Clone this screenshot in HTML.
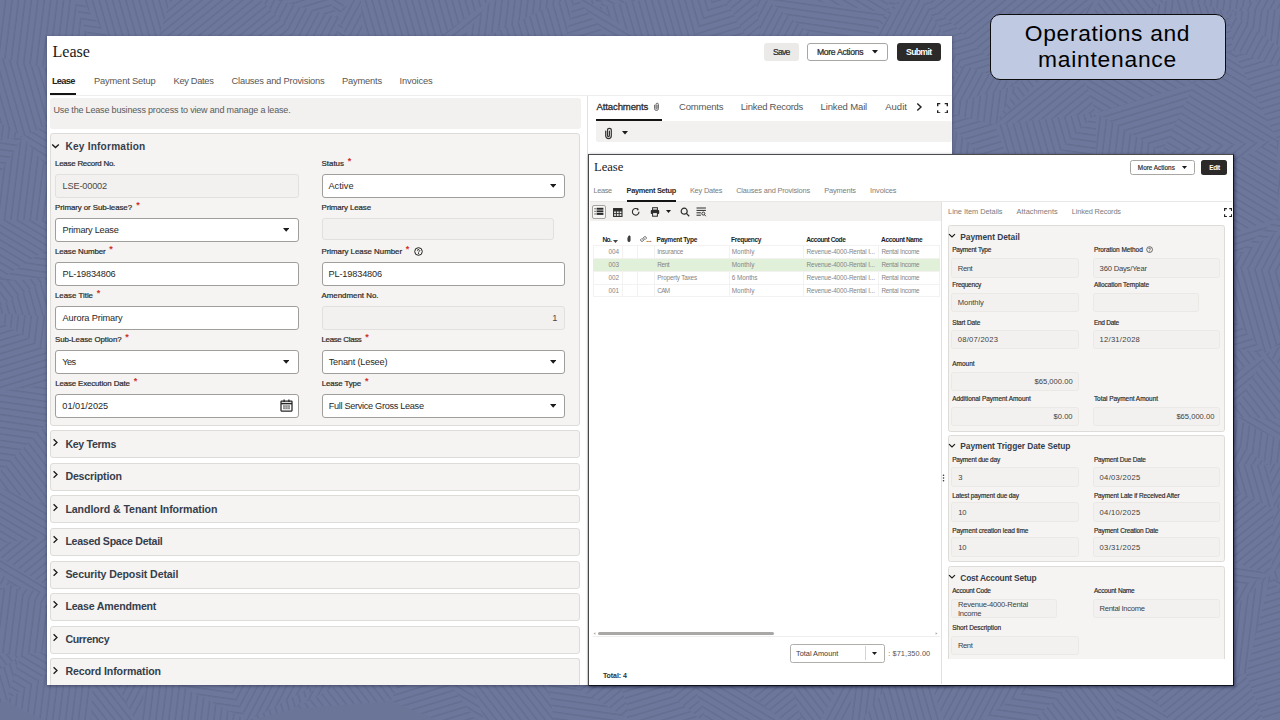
<!DOCTYPE html>
<html><head><meta charset="utf-8"><title>Operations and maintenance</title>
<style>
html,body{margin:0;padding:0;}
body{width:1280px;height:720px;overflow:hidden;background:#6b7598;font-family:"Liberation Sans",sans-serif;}
#slide{position:relative;width:1280px;height:720px;overflow:hidden;background:#6b7598;}
.b{position:absolute;box-sizing:border-box;display:block;}
.t{position:absolute;white-space:nowrap;font-family:"Liberation Sans",sans-serif;}
.win{position:absolute;overflow:hidden;background:#fff;box-sizing:border-box;}
.sf{font-family:"Liberation Serif",serif;}
.sb{-webkit-text-stroke:.027em currentColor;}

</style></head>
<body>
<div id="slide">
<svg class="b" style="left:0.00px;top:0.00px;" width="1280" height="720" viewBox="0 0 1280 720"><defs><pattern id="h0" patternUnits="userSpaceOnUse" width="6.4" height="6.4" patternTransform="rotate(8)"><rect width="6.4" height="6.4" fill="#6d779b"/><rect y="0" width="6.4" height="1.5" fill="#636d90"/></pattern><pattern id="h1" patternUnits="userSpaceOnUse" width="6.4" height="6.4" patternTransform="rotate(31)"><rect width="6.4" height="6.4" fill="#6d779b"/><rect y="0" width="6.4" height="1.5" fill="#636d90"/></pattern><pattern id="h2" patternUnits="userSpaceOnUse" width="6.4" height="6.4" patternTransform="rotate(52)"><rect width="6.4" height="6.4" fill="#6d779b"/><rect y="0" width="6.4" height="1.5" fill="#636d90"/></pattern><pattern id="h3" patternUnits="userSpaceOnUse" width="6.4" height="6.4" patternTransform="rotate(74)"><rect width="6.4" height="6.4" fill="#6d779b"/><rect y="0" width="6.4" height="1.5" fill="#636d90"/></pattern><pattern id="h4" patternUnits="userSpaceOnUse" width="6.4" height="6.4" patternTransform="rotate(97)"><rect width="6.4" height="6.4" fill="#6d779b"/><rect y="0" width="6.4" height="1.5" fill="#636d90"/></pattern><pattern id="h5" patternUnits="userSpaceOnUse" width="6.4" height="6.4" patternTransform="rotate(118)"><rect width="6.4" height="6.4" fill="#6d779b"/><rect y="0" width="6.4" height="1.5" fill="#636d90"/></pattern><pattern id="h6" patternUnits="userSpaceOnUse" width="6.4" height="6.4" patternTransform="rotate(141)"><rect width="6.4" height="6.4" fill="#6d779b"/><rect y="0" width="6.4" height="1.5" fill="#636d90"/></pattern><pattern id="h7" patternUnits="userSpaceOnUse" width="6.4" height="6.4" patternTransform="rotate(163)"><rect width="6.4" height="6.4" fill="#6d779b"/><rect y="0" width="6.4" height="1.5" fill="#636d90"/></pattern><filter id="bl" x="0" y="0" width="100%" height="100%"><feGaussianBlur stdDeviation="0.7"/></filter></defs><g filter="url(#bl)"><path d="M-81 -63L25 -68L-11 -14z" fill="url(#h7)"/><path d="M-81 -63L-11 -14L-58 11z" fill="url(#h1)"/><path d="M25 -68L78 -61L65 -22z" fill="url(#h5)"/><path d="M25 -68L65 -22L-11 -14z" fill="url(#h0)"/><path d="M78 -61L137 -65L172 -5z" fill="url(#h4)"/><path d="M78 -61L172 -5L65 -22z" fill="url(#h5)"/><path d="M137 -65L242 -51L255 -6z" fill="url(#h6)"/><path d="M137 -65L255 -6L172 -5z" fill="url(#h2)"/><path d="M242 -51L288 -76L255 -6z" fill="url(#h6)"/><path d="M288 -76L339 18L255 -6z" fill="url(#h7)"/><path d="M288 -76L365 -50L339 18z" fill="url(#h1)"/><path d="M365 -50L360 -15L339 18z" fill="url(#h6)"/><path d="M365 -50L480 -90L360 -15z" fill="url(#h0)"/><path d="M480 -90L493 -2L360 -15z" fill="url(#h1)"/><path d="M480 -90L575 -42L493 -2z" fill="url(#h3)"/><path d="M575 -42L575 -5L493 -2z" fill="url(#h4)"/><path d="M575 -42L633 -60L598 7z" fill="url(#h0)"/><path d="M575 -42L598 7L575 -5z" fill="url(#h3)"/><path d="M633 -60L681 -91L598 7z" fill="url(#h0)"/><path d="M681 -91L719 -12L598 7z" fill="url(#h1)"/><path d="M681 -91L782 -89L755 -9z" fill="url(#h4)"/><path d="M681 -91L755 -9L719 -12z" fill="url(#h5)"/><path d="M782 -89L839 -79L755 -9z" fill="url(#h6)"/><path d="M839 -79L886 13L755 -9z" fill="url(#h1)"/><path d="M839 -79L908 -68L886 13z" fill="url(#h1)"/><path d="M908 -68L913 -13L886 13z" fill="url(#h0)"/><path d="M908 -68L1010 -48L990 -23z" fill="url(#h2)"/><path d="M908 -68L990 -23L913 -13z" fill="url(#h6)"/><path d="M1010 -48L1093 -59L1110 -17z" fill="url(#h2)"/><path d="M1010 -48L1110 -17L990 -23z" fill="url(#h7)"/><path d="M1093 -59L1170 -58L1110 -17z" fill="url(#h0)"/><path d="M1170 -58L1174 -3L1110 -17z" fill="url(#h6)"/><path d="M1170 -58L1245 -78L1174 -3z" fill="url(#h6)"/><path d="M1245 -78L1229 12L1174 -3z" fill="url(#h4)"/><path d="M1245 -78L1356 -40L1229 12z" fill="url(#h4)"/><path d="M1356 -40L1304 7L1229 12z" fill="url(#h5)"/><path d="M-58 11L-11 -14L-101 62z" fill="url(#h7)"/><path d="M-11 -14L-17 54L-101 62z" fill="url(#h4)"/><path d="M-11 -14L65 -22L-17 54z" fill="url(#h4)"/><path d="M65 -22L106 82L-17 54z" fill="url(#h4)"/><path d="M65 -22L172 -5L144 86z" fill="url(#h3)"/><path d="M65 -22L144 86L106 82z" fill="url(#h0)"/><path d="M172 -5L255 -6L144 86z" fill="url(#h6)"/><path d="M255 -6L217 61L144 86z" fill="url(#h6)"/><path d="M255 -6L339 18L333 73z" fill="url(#h5)"/><path d="M255 -6L333 73L217 61z" fill="url(#h6)"/><path d="M339 18L360 -15L366 91z" fill="url(#h5)"/><path d="M339 18L366 91L333 73z" fill="url(#h1)"/><path d="M360 -15L493 -2L366 91z" fill="url(#h3)"/><path d="M493 -2L451 53L366 91z" fill="url(#h6)"/><path d="M493 -2L575 -5L451 53z" fill="url(#h4)"/><path d="M575 -5L562 57L451 53z" fill="url(#h3)"/><path d="M575 -5L598 7L612 44z" fill="url(#h1)"/><path d="M575 -5L612 44L562 57z" fill="url(#h7)"/><path d="M598 7L719 -12L677 70z" fill="url(#h3)"/><path d="M598 7L677 70L612 44z" fill="url(#h1)"/><path d="M719 -12L755 -9L765 71z" fill="url(#h6)"/><path d="M719 -12L765 71L677 70z" fill="url(#h7)"/><path d="M755 -9L886 13L850 64z" fill="url(#h0)"/><path d="M755 -9L850 64L765 71z" fill="url(#h5)"/><path d="M886 13L913 -13L850 64z" fill="url(#h1)"/><path d="M913 -13L964 65L850 64z" fill="url(#h5)"/><path d="M913 -13L990 -23L1018 85z" fill="url(#h6)"/><path d="M913 -13L1018 85L964 65z" fill="url(#h7)"/><path d="M990 -23L1110 -17L1018 85z" fill="url(#h6)"/><path d="M1110 -17L1073 48L1018 85z" fill="url(#h5)"/><path d="M1110 -17L1174 -3L1073 48z" fill="url(#h2)"/><path d="M1174 -3L1195 83L1073 48z" fill="url(#h4)"/><path d="M1174 -3L1229 12L1195 83z" fill="url(#h3)"/><path d="M1229 12L1233 50L1195 83z" fill="url(#h7)"/><path d="M1229 12L1304 7L1340 89z" fill="url(#h4)"/><path d="M1229 12L1340 89L1233 50z" fill="url(#h5)"/><path d="M-101 62L-17 54L23 137z" fill="url(#h3)"/><path d="M-101 62L23 137L-96 155z" fill="url(#h4)"/><path d="M-17 54L106 82L23 137z" fill="url(#h3)"/><path d="M106 82L73 111L23 137z" fill="url(#h3)"/><path d="M106 82L144 86L73 111z" fill="url(#h3)"/><path d="M144 86L128 156L73 111z" fill="url(#h0)"/><path d="M144 86L217 61L128 156z" fill="url(#h0)"/><path d="M217 61L218 143L128 156z" fill="url(#h4)"/><path d="M217 61L333 73L297 149z" fill="url(#h0)"/><path d="M217 61L297 149L218 143z" fill="url(#h0)"/><path d="M333 73L366 91L396 121z" fill="url(#h4)"/><path d="M333 73L396 121L297 149z" fill="url(#h1)"/><path d="M366 91L451 53L396 121z" fill="url(#h2)"/><path d="M451 53L449 143L396 121z" fill="url(#h3)"/><path d="M451 53L562 57L449 143z" fill="url(#h5)"/><path d="M562 57L520 118L449 143z" fill="url(#h7)"/><path d="M562 57L612 44L628 150z" fill="url(#h3)"/><path d="M562 57L628 150L520 118z" fill="url(#h5)"/><path d="M612 44L677 70L709 121z" fill="url(#h2)"/><path d="M612 44L709 121L628 150z" fill="url(#h1)"/><path d="M677 70L765 71L709 121z" fill="url(#h7)"/><path d="M765 71L805 117L709 121z" fill="url(#h3)"/><path d="M765 71L850 64L829 120z" fill="url(#h4)"/><path d="M765 71L829 120L805 117z" fill="url(#h6)"/><path d="M850 64L964 65L829 120z" fill="url(#h5)"/><path d="M964 65L933 109L829 120z" fill="url(#h2)"/><path d="M964 65L1018 85L933 109z" fill="url(#h5)"/><path d="M1018 85L995 125L933 109z" fill="url(#h4)"/><path d="M1018 85L1073 48L995 125z" fill="url(#h2)"/><path d="M1073 48L1096 113L995 125z" fill="url(#h6)"/><path d="M1073 48L1195 83L1096 113z" fill="url(#h1)"/><path d="M1195 83L1162 152L1096 113z" fill="url(#h7)"/><path d="M1195 83L1233 50L1162 152z" fill="url(#h1)"/><path d="M1233 50L1277 140L1162 152z" fill="url(#h1)"/><path d="M1233 50L1340 89L1337 136z" fill="url(#h7)"/><path d="M1233 50L1337 136L1277 140z" fill="url(#h7)"/><path d="M-96 155L23 137L-29 219z" fill="url(#h0)"/><path d="M-96 155L-29 219L-100 174z" fill="url(#h1)"/><path d="M23 137L73 111L90 222z" fill="url(#h1)"/><path d="M23 137L90 222L-29 219z" fill="url(#h4)"/><path d="M73 111L128 156L127 205z" fill="url(#h5)"/><path d="M73 111L127 205L90 222z" fill="url(#h4)"/><path d="M128 156L218 143L127 205z" fill="url(#h3)"/><path d="M218 143L233 210L127 205z" fill="url(#h5)"/><path d="M218 143L297 149L233 210z" fill="url(#h5)"/><path d="M297 149L301 224L233 210z" fill="url(#h5)"/><path d="M297 149L396 121L301 224z" fill="url(#h5)"/><path d="M396 121L365 200L301 224z" fill="url(#h7)"/><path d="M396 121L449 143L365 200z" fill="url(#h4)"/><path d="M449 143L482 219L365 200z" fill="url(#h7)"/><path d="M449 143L520 118L482 219z" fill="url(#h4)"/><path d="M520 118L560 209L482 219z" fill="url(#h7)"/><path d="M520 118L628 150L642 220z" fill="url(#h6)"/><path d="M520 118L642 220L560 209z" fill="url(#h3)"/><path d="M628 150L709 121L693 208z" fill="url(#h5)"/><path d="M628 150L693 208L642 220z" fill="url(#h0)"/><path d="M709 121L805 117L804 217z" fill="url(#h6)"/><path d="M709 121L804 217L693 208z" fill="url(#h6)"/><path d="M805 117L829 120L804 217z" fill="url(#h5)"/><path d="M829 120L853 213L804 217z" fill="url(#h6)"/><path d="M829 120L933 109L853 213z" fill="url(#h2)"/><path d="M933 109L958 202L853 213z" fill="url(#h2)"/><path d="M933 109L995 125L1021 192z" fill="url(#h7)"/><path d="M933 109L1021 192L958 202z" fill="url(#h4)"/><path d="M995 125L1096 113L1021 192z" fill="url(#h3)"/><path d="M1096 113L1097 204L1021 192z" fill="url(#h0)"/><path d="M1096 113L1162 152L1097 204z" fill="url(#h4)"/><path d="M1162 152L1145 205L1097 204z" fill="url(#h0)"/><path d="M1162 152L1277 140L1145 205z" fill="url(#h6)"/><path d="M1277 140L1278 218L1145 205z" fill="url(#h1)"/><path d="M1277 140L1337 136L1278 218z" fill="url(#h4)"/><path d="M1337 136L1340 192L1278 218z" fill="url(#h1)"/><path d="M-100 174L-29 219L-4 282z" fill="url(#h4)"/><path d="M-100 174L-4 282L-64 268z" fill="url(#h1)"/><path d="M-29 219L90 222L-4 282z" fill="url(#h1)"/><path d="M90 222L53 277L-4 282z" fill="url(#h0)"/><path d="M853 213L958 202L918 260z" fill="url(#h5)"/><path d="M958 202L1021 192L918 260z" fill="url(#h7)"/><path d="M1021 192L1032 286L918 260z" fill="url(#h7)"/><path d="M1021 192L1097 204L1032 286z" fill="url(#h1)"/><path d="M1097 204L1115 258L1032 286z" fill="url(#h0)"/><path d="M1097 204L1145 205L1175 254z" fill="url(#h5)"/><path d="M1097 204L1175 254L1115 258z" fill="url(#h0)"/><path d="M1145 205L1278 218L1175 254z" fill="url(#h1)"/><path d="M1278 218L1226 264L1175 254z" fill="url(#h7)"/><path d="M1278 218L1340 192L1226 264z" fill="url(#h0)"/><path d="M1340 192L1346 282L1226 264z" fill="url(#h5)"/><path d="M-64 268L-4 282L-65 353z" fill="url(#h1)"/><path d="M-4 282L-13 313L-65 353z" fill="url(#h6)"/><path d="M-4 282L53 277L-13 313z" fill="url(#h2)"/><path d="M53 277L75 318L-13 313z" fill="url(#h3)"/><path d="M848 273L918 260L956 316z" fill="url(#h2)"/><path d="M848 273L956 316L855 305z" fill="url(#h2)"/><path d="M918 260L1032 286L956 316z" fill="url(#h7)"/><path d="M1032 286L992 306L956 316z" fill="url(#h0)"/><path d="M1032 286L1115 258L992 306z" fill="url(#h0)"/><path d="M1115 258L1100 327L992 306z" fill="url(#h5)"/><path d="M1115 258L1175 254L1178 338z" fill="url(#h2)"/><path d="M1115 258L1178 338L1100 327z" fill="url(#h5)"/><path d="M1175 254L1226 264L1266 354z" fill="url(#h3)"/><path d="M1175 254L1266 354L1178 338z" fill="url(#h7)"/><path d="M1226 264L1346 282L1266 354z" fill="url(#h3)"/><path d="M1346 282L1337 314L1266 354z" fill="url(#h7)"/><path d="M-65 353L-13 313L-29 395z" fill="url(#h4)"/><path d="M-65 353L-29 395L-79 379z" fill="url(#h6)"/><path d="M-13 313L75 318L91 379z" fill="url(#h4)"/><path d="M-13 313L91 379L-29 395z" fill="url(#h7)"/><path d="M855 305L956 316L963 394z" fill="url(#h6)"/><path d="M855 305L963 394L881 411z" fill="url(#h4)"/><path d="M956 316L992 306L963 394z" fill="url(#h0)"/><path d="M992 306L1023 381L963 394z" fill="url(#h3)"/><path d="M992 306L1100 327L1023 381z" fill="url(#h7)"/><path d="M1100 327L1105 413L1023 381z" fill="url(#h5)"/><path d="M1100 327L1178 338L1178 407z" fill="url(#h3)"/><path d="M1100 327L1178 407L1105 413z" fill="url(#h6)"/><path d="M1178 338L1266 354L1178 407z" fill="url(#h2)"/><path d="M1266 354L1231 417L1178 407z" fill="url(#h6)"/><path d="M1266 354L1337 314L1355 421z" fill="url(#h5)"/><path d="M1266 354L1355 421L1231 417z" fill="url(#h2)"/><path d="M-79 379L-29 395L-11 483z" fill="url(#h2)"/><path d="M-79 379L-11 483L-76 477z" fill="url(#h4)"/><path d="M-29 395L91 379L-11 483z" fill="url(#h0)"/><path d="M91 379L99 454L-11 483z" fill="url(#h2)"/><path d="M881 411L963 394L885 462z" fill="url(#h1)"/><path d="M963 394L963 440L885 462z" fill="url(#h4)"/><path d="M963 394L1023 381L997 463z" fill="url(#h3)"/><path d="M963 394L997 463L963 440z" fill="url(#h6)"/><path d="M1023 381L1105 413L1079 474z" fill="url(#h1)"/><path d="M1023 381L1079 474L997 463z" fill="url(#h7)"/><path d="M1105 413L1178 407L1178 463z" fill="url(#h6)"/><path d="M1105 413L1178 463L1079 474z" fill="url(#h7)"/><path d="M1178 407L1231 417L1269 465z" fill="url(#h4)"/><path d="M1178 407L1269 465L1178 463z" fill="url(#h5)"/><path d="M1231 417L1355 421L1315 456z" fill="url(#h1)"/><path d="M1231 417L1315 456L1269 465z" fill="url(#h4)"/><path d="M-76 477L-11 483L-57 549z" fill="url(#h1)"/><path d="M-11 483L-18 546L-57 549z" fill="url(#h5)"/><path d="M-11 483L99 454L106 529z" fill="url(#h2)"/><path d="M-11 483L106 529L-18 546z" fill="url(#h1)"/><path d="M885 462L963 440L914 525z" fill="url(#h0)"/><path d="M963 440L997 463L914 525z" fill="url(#h3)"/><path d="M997 463L1033 549L914 525z" fill="url(#h2)"/><path d="M997 463L1079 474L1091 518z" fill="url(#h6)"/><path d="M997 463L1091 518L1033 549z" fill="url(#h4)"/><path d="M1079 474L1178 463L1091 518z" fill="url(#h6)"/><path d="M1178 463L1151 534L1091 518z" fill="url(#h1)"/><path d="M1178 463L1269 465L1274 509z" fill="url(#h3)"/><path d="M1178 463L1274 509L1151 534z" fill="url(#h6)"/><path d="M1269 465L1315 456L1274 509z" fill="url(#h5)"/><path d="M1315 456L1343 503L1274 509z" fill="url(#h4)"/><path d="M-57 549L-18 546L-96 580z" fill="url(#h7)"/><path d="M-18 546L11 585L-96 580z" fill="url(#h5)"/><path d="M-18 546L106 529L69 600z" fill="url(#h6)"/><path d="M-18 546L69 600L11 585z" fill="url(#h1)"/><path d="M844 527L914 525L950 610z" fill="url(#h1)"/><path d="M844 527L950 610L879 580z" fill="url(#h6)"/><path d="M914 525L1033 549L1038 584z" fill="url(#h1)"/><path d="M914 525L1038 584L950 610z" fill="url(#h5)"/><path d="M1033 549L1091 518L1038 584z" fill="url(#h6)"/><path d="M1091 518L1081 616L1038 584z" fill="url(#h2)"/><path d="M1091 518L1151 534L1081 616z" fill="url(#h2)"/><path d="M1151 534L1153 620L1081 616z" fill="url(#h6)"/><path d="M1151 534L1274 509L1271 575z" fill="url(#h6)"/><path d="M1151 534L1271 575L1153 620z" fill="url(#h0)"/><path d="M1274 509L1343 503L1271 575z" fill="url(#h5)"/><path d="M1343 503L1310 606L1271 575z" fill="url(#h3)"/><path d="M-96 580L11 585L-92 639z" fill="url(#h0)"/><path d="M11 585L20 656L-92 639z" fill="url(#h4)"/><path d="M11 585L69 600L95 641z" fill="url(#h5)"/><path d="M11 585L95 641L20 656z" fill="url(#h4)"/><path d="M211 595L297 578L323 681z" fill="url(#h5)"/><path d="M211 595L323 681L205 644z" fill="url(#h4)"/><path d="M297 578L392 591L323 681z" fill="url(#h2)"/><path d="M392 591L418 640L323 681z" fill="url(#h4)"/><path d="M879 580L950 610L862 642z" fill="url(#h3)"/><path d="M950 610L917 645L862 642z" fill="url(#h0)"/><path d="M950 610L1038 584L917 645z" fill="url(#h3)"/><path d="M1038 584L1034 685L917 645z" fill="url(#h1)"/><path d="M1038 584L1081 616L1118 639z" fill="url(#h7)"/><path d="M1038 584L1118 639L1034 685z" fill="url(#h6)"/><path d="M1081 616L1153 620L1118 639z" fill="url(#h5)"/><path d="M1153 620L1144 683L1118 639z" fill="url(#h1)"/><path d="M1153 620L1271 575L1144 683z" fill="url(#h5)"/><path d="M1271 575L1246 674L1144 683z" fill="url(#h4)"/><path d="M1271 575L1310 606L1316 658z" fill="url(#h1)"/><path d="M1271 575L1316 658L1246 674z" fill="url(#h7)"/><path d="M-92 639L20 656L-77 722z" fill="url(#h2)"/><path d="M20 656L6 701L-77 722z" fill="url(#h3)"/><path d="M20 656L95 641L6 701z" fill="url(#h1)"/><path d="M95 641L90 744L6 701z" fill="url(#h4)"/><path d="M95 641L150 670L137 724z" fill="url(#h5)"/><path d="M95 641L137 724L90 744z" fill="url(#h2)"/><path d="M150 670L205 644L248 721z" fill="url(#h0)"/><path d="M150 670L248 721L137 724z" fill="url(#h4)"/><path d="M205 644L323 681L248 721z" fill="url(#h5)"/><path d="M323 681L294 709L248 721z" fill="url(#h3)"/><path d="M323 681L418 640L294 709z" fill="url(#h5)"/><path d="M418 640L391 701L294 709z" fill="url(#h2)"/><path d="M418 640L468 673L492 742z" fill="url(#h1)"/><path d="M418 640L492 742L391 701z" fill="url(#h7)"/><path d="M468 673L546 670L558 745z" fill="url(#h2)"/><path d="M468 673L558 745L492 742z" fill="url(#h2)"/><path d="M546 670L605 638L632 721z" fill="url(#h6)"/><path d="M546 670L632 721L558 745z" fill="url(#h0)"/><path d="M605 638L678 636L708 726z" fill="url(#h6)"/><path d="M605 638L708 726L632 721z" fill="url(#h7)"/><path d="M678 636L783 661L809 742z" fill="url(#h6)"/><path d="M678 636L809 742L708 726z" fill="url(#h1)"/><path d="M783 661L862 642L809 742z" fill="url(#h2)"/><path d="M862 642L843 747L809 742z" fill="url(#h5)"/><path d="M862 642L917 645L843 747z" fill="url(#h4)"/><path d="M917 645L951 740L843 747z" fill="url(#h3)"/><path d="M917 645L1034 685L951 740z" fill="url(#h5)"/><path d="M1034 685L1033 721L951 740z" fill="url(#h0)"/><path d="M1034 685L1118 639L1033 721z" fill="url(#h0)"/><path d="M1118 639L1116 746L1033 721z" fill="url(#h2)"/><path d="M1118 639L1144 683L1182 740z" fill="url(#h7)"/><path d="M1118 639L1182 740L1116 746z" fill="url(#h1)"/><path d="M1144 683L1246 674L1264 721z" fill="url(#h6)"/><path d="M1144 683L1264 721L1182 740z" fill="url(#h6)"/><path d="M1246 674L1316 658L1264 721z" fill="url(#h7)"/><path d="M1316 658L1339 704L1264 721z" fill="url(#h7)"/></g></svg>
<div class="b" style="left:990.00px;top:14.00px;width:236.00px;height:66.00px;background:#bfc9e1;border:1px solid #0d0d0d;border-radius:10px;"></div>
<span class="t" style="top:16.80px;font-size:22.8px;line-height:32px;color:#000;left:1107.50px;transform:translateX(-50%);letter-spacing:0.686px;">Operations and</span>
<span class="t" style="top:43.00px;font-size:22.8px;line-height:32px;color:#000;left:1107.50px;transform:translateX(-50%);letter-spacing:0.768px;">maintenance</span>
<div class="b" style="left:47.00px;top:36.00px;width:904.90px;height:649.00px;background:#fff;box-shadow:0 1px 3px rgba(20,25,50,.45);"></div>
<span class="t sf" style="top:39.57px;font-size:16.1px;line-height:23px;color:#1c1c1c;left:52.50px;letter-spacing:-0.046px;">Lease</span>
<span class="t" style="top:74.26px;font-size:9.3px;line-height:14px;color:#1f1f1f;font-weight:700;left:51.90px;letter-spacing:-0.705px;">Lease</span>
<span class="t" style="top:74.26px;font-size:9.3px;line-height:14px;color:#565656;left:94.00px;letter-spacing:-0.160px;">Payment Setup</span>
<span class="t" style="top:74.26px;font-size:9.3px;line-height:14px;color:#565656;left:173.50px;letter-spacing:-0.321px;">Key Dates</span>
<span class="t" style="top:74.26px;font-size:9.3px;line-height:14px;color:#565656;left:231.50px;letter-spacing:-0.189px;">Clauses and Provisions</span>
<span class="t" style="top:74.26px;font-size:9.3px;line-height:14px;color:#565656;left:342.00px;letter-spacing:-0.168px;">Payments</span>
<span class="t" style="top:74.26px;font-size:9.3px;line-height:14px;color:#565656;left:399.50px;letter-spacing:-0.139px;">Invoices</span>
<div class="b" style="left:50.00px;top:94.60px;width:901.90px;height:1.00px;background:#efeeec;"></div>
<div class="b" style="left:50.00px;top:92.60px;width:26.20px;height:2.20px;background:#141414;"></div>
<div class="b" style="left:764.00px;top:43.10px;width:35.00px;height:17.50px;background:#eceae8;border-radius:3px;"></div>
<span class="t sb" style="top:46.19px;font-size:8.6px;line-height:13px;color:#2a2a2a;left:781.20px;transform:translateX(-50%);letter-spacing:-0.798px;">Save</span>
<div class="b" style="left:807.20px;top:43.10px;width:80.80px;height:17.50px;background:#fff;border:1px solid #a8a6a3;border-radius:3px;"></div>
<span class="t sb" style="top:46.19px;font-size:8.6px;line-height:13px;color:#2a2a2a;left:816.90px;letter-spacing:-0.274px;">More Actions</span>
<svg class="b" style="left:872.30px;top:49.80px;" width="6" height="4" viewBox="0 0 6 4"><path d="M0 0h6L3 3.6z" fill="#1a1a1a"/></svg>
<div class="b" style="left:897.00px;top:43.10px;width:43.90px;height:17.50px;background:#2c2a28;border-radius:3px;"></div>
<span class="t" style="top:46.18px;font-size:8.7px;line-height:13px;color:#fff;font-weight:700;left:918.70px;transform:translateX(-50%);letter-spacing:-0.692px;">Submit</span>
<div class="b" style="left:50.00px;top:98.00px;width:530.60px;height:30.60px;background:#f2f1ef;border-radius:3px;"></div>
<span class="t" style="top:103.47px;font-size:9px;line-height:14px;color:#5a5a5a;left:53.50px;letter-spacing:-0.175px;">Use the Lease business process to view and manage a lease.</span>
<div class="b" style="left:587.30px;top:96.00px;width:1.00px;height:589.00px;background:#e2e1df;"></div>
<span class="t sb" style="top:99.95px;font-size:9.6px;line-height:14px;color:#262626;left:596.60px;letter-spacing:-0.157px;">Attachments</span>
<svg class="b" style="left:653.10px;top:101.90px;" width="7" height="10" viewBox="0 0 7 10"><path d="M1.6 3.2v3.4a1.9 1.9 0 0 0 3.8 0V2.4a1.2 1.2 0 0 0-2.4 0v4a.55.55 0 0 0 1.1 0V3.2" fill="none" stroke="#555" stroke-width=".9" stroke-linecap="round"/></svg>
<span class="t" style="top:99.95px;font-size:9.5px;line-height:14px;color:#565656;left:679.00px;letter-spacing:-0.205px;">Comments</span>
<span class="t" style="top:99.95px;font-size:9.5px;line-height:14px;color:#565656;left:740.80px;letter-spacing:-0.265px;">Linked Records</span>
<span class="t" style="top:99.95px;font-size:9.5px;line-height:14px;color:#565656;left:820.60px;letter-spacing:-0.142px;">Linked Mail</span>
<span class="t" style="top:99.95px;font-size:9.5px;line-height:14px;color:#565656;left:885.20px;letter-spacing:0.029px;">Audit</span>
<svg class="b" style="left:915.00px;top:102.00px;" width="8" height="10" viewBox="0 0 8 10"><path d="M2.3 1.5L6 5 2.3 8.5" fill="none" stroke="#222" stroke-width="1.4"/></svg>
<svg class="b" style="left:937.20px;top:102.80px;" width="11" height="10.5" viewBox="0 0 12 12" preserveAspectRatio="none"><path d="M.7 3.6V.7h2.9M8.4.7h2.9v2.9M11.3 8.4v2.9H8.4M3.6 11.3H.7V8.4" fill="none" stroke="#222" stroke-width="1.6"/></svg>
<div class="b" style="left:596.20px;top:118.70px;width:65.70px;height:2.30px;background:#141414;"></div>
<div class="b" style="left:596.00px;top:121.30px;width:355.90px;height:20.80px;background:#f2f1ef;border-radius:2px;"></div>
<svg class="b" style="left:602.90px;top:126.60px;" width="11" height="13" viewBox="0 0 11 13"><path d="M2.7 4.2v4.6a2.8 2.8 0 0 0 5.6 0V3.3a1.9 1.9 0 0 0-3.8 0v5.3a.95.95 0 0 0 1.9 0V4.2" fill="none" stroke="#333" stroke-width="1.2" stroke-linecap="round"/></svg>
<svg class="b" style="left:622.40px;top:131.00px;" width="6" height="4" viewBox="0 0 6 4"><path d="M0 0h6L3 3.6z" fill="#1a1a1a"/></svg>
<div class="b" style="left:50.00px;top:133.00px;width:530.00px;height:293.00px;background:#f5f4f2;border:1px solid #dedcd9;border-radius:3px;"></div>
<svg class="b" style="left:51.00px;top:142.50px;" width="9" height="7" viewBox="0 0 9 7"><path d="M1.2 1.4L4.5 4.6 7.8 1.4" fill="none" stroke="#1a1a1a" stroke-width="1.35"/></svg>
<span class="t" style="top:139.20px;font-size:10.1px;line-height:15px;color:#353e4c;font-weight:700;left:65.50px;letter-spacing:0.210px;">Key Information</span>
<span class="t sb" style="top:158.21px;font-size:7.9px;line-height:12px;color:#2b2a29;left:55.00px;letter-spacing:-0.219px;">Lease Record No.</span>
<div class="b" style="left:55.00px;top:174.00px;width:244.00px;height:23.50px;background:#f2f1ef;border:1px solid #e1e0dd;border-radius:3px;"></div>
<span class="t" style="top:179.06px;font-size:9.2px;line-height:14px;color:#4a4947;left:62.60px;letter-spacing:-0.176px;">LSE-00002</span>
<span class="t sb" style="top:202.21px;font-size:7.9px;line-height:12px;color:#2b2a29;left:55.00px;letter-spacing:-0.071px;">Primary or Sub-lease?</span>
<span class="t" style="top:197.57px;font-size:9px;line-height:14px;color:#d0312a;font-weight:700;left:136.20px;">*</span>
<div class="b" style="left:55.00px;top:218.00px;width:244.00px;height:23.50px;background:#fff;border:1px solid #a09e9b;border-radius:3px;"></div>
<span class="t" style="top:223.06px;font-size:9.2px;line-height:14px;color:#292827;left:62.50px;letter-spacing:-0.249px;">Primary Lease</span>
<svg class="b" style="left:282.80px;top:228.20px;" width="6.4" height="4.2" viewBox="0 0 6.4 4.2"><path d="M0 0h6.4L3.2 3.8z" fill="#1a1a1a"/></svg>
<span class="t sb" style="top:246.21px;font-size:7.9px;line-height:12px;color:#2b2a29;left:55.00px;letter-spacing:-0.105px;">Lease Number</span>
<span class="t" style="top:241.57px;font-size:9px;line-height:14px;color:#d0312a;font-weight:700;left:109.20px;">*</span>
<div class="b" style="left:55.00px;top:262.00px;width:244.00px;height:23.50px;background:#fff;border:1px solid #a09e9b;border-radius:3px;"></div>
<span class="t" style="top:267.06px;font-size:9.2px;line-height:14px;color:#292827;left:62.50px;letter-spacing:-0.199px;">PL-19834806</span>
<span class="t sb" style="top:290.21px;font-size:7.9px;line-height:12px;color:#2b2a29;left:55.00px;letter-spacing:-0.016px;">Lease Title</span>
<span class="t" style="top:285.57px;font-size:9px;line-height:14px;color:#d0312a;font-weight:700;left:96.70px;">*</span>
<div class="b" style="left:55.00px;top:306.00px;width:244.00px;height:23.50px;background:#fff;border:1px solid #a09e9b;border-radius:3px;"></div>
<span class="t" style="top:311.06px;font-size:9.2px;line-height:14px;color:#292827;left:62.50px;letter-spacing:-0.127px;">Aurora Primary</span>
<span class="t sb" style="top:334.21px;font-size:7.9px;line-height:12px;color:#2b2a29;left:55.00px;letter-spacing:-0.088px;">Sub-Lease Option?</span>
<span class="t" style="top:329.57px;font-size:9px;line-height:14px;color:#d0312a;font-weight:700;left:125.20px;">*</span>
<div class="b" style="left:55.00px;top:350.00px;width:244.00px;height:23.50px;background:#fff;border:1px solid #a09e9b;border-radius:3px;"></div>
<span class="t" style="top:355.06px;font-size:9.2px;line-height:14px;color:#292827;left:62.30px;letter-spacing:-0.633px;">Yes</span>
<svg class="b" style="left:282.80px;top:360.20px;" width="6.4" height="4.2" viewBox="0 0 6.4 4.2"><path d="M0 0h6.4L3.2 3.8z" fill="#1a1a1a"/></svg>
<span class="t sb" style="top:378.21px;font-size:7.9px;line-height:12px;color:#2b2a29;left:55.20px;letter-spacing:-0.131px;">Lease Execution Date</span>
<span class="t" style="top:373.57px;font-size:9px;line-height:14px;color:#d0312a;font-weight:700;left:133.80px;">*</span>
<div class="b" style="left:55.00px;top:394.00px;width:244.00px;height:23.50px;background:#fff;border:1px solid #a09e9b;border-radius:3px;"></div>
<span class="t" style="top:399.06px;font-size:9.2px;line-height:14px;color:#292827;left:62.30px;letter-spacing:-0.008px;">01/01/2025</span>
<svg class="b" style="left:279.90px;top:399.20px;" width="13" height="13" viewBox="0 0 13 13"><rect x="1" y="2.2" width="11" height="9.8" rx=".5" fill="none" stroke="#262626" stroke-width="1.25"/><path d="M1 4.6h11" stroke="#262626" stroke-width="1.5"/><path d="M4.1 .6v2.4M8.9 .6v2.4" stroke="#262626" stroke-width="1.3"/><rect x="3" y="6.2" width="7" height="4" fill="#8d8d8d"/><path d="M5.3 6.2v4M7.7 6.2v4M3 8.2h7" stroke="#c9c9c9" stroke-width=".5"/></svg>
<span class="t sb" style="top:158.21px;font-size:7.9px;line-height:12px;color:#2b2a29;left:321.50px;letter-spacing:0.021px;">Status</span>
<span class="t" style="top:153.57px;font-size:9px;line-height:14px;color:#d0312a;font-weight:700;left:347.70px;">*</span>
<div class="b" style="left:321.50px;top:174.00px;width:243.50px;height:23.50px;background:#fff;border:1px solid #a09e9b;border-radius:3px;"></div>
<span class="t" style="top:179.06px;font-size:9.2px;line-height:14px;color:#292827;left:328.50px;letter-spacing:-0.005px;">Active</span>
<svg class="b" style="left:550.00px;top:184.20px;" width="6.4" height="4.2" viewBox="0 0 6.4 4.2"><path d="M0 0h6.4L3.2 3.8z" fill="#1a1a1a"/></svg>
<span class="t sb" style="top:202.21px;font-size:7.9px;line-height:12px;color:#2b2a29;left:321.50px;letter-spacing:-0.106px;">Primary Lease</span>
<div class="b" style="left:321.50px;top:218.00px;width:232.50px;height:22.40px;background:#f2f1ef;border:1px solid #e1e0dd;border-radius:3px;"></div>
<span class="t sb" style="top:246.21px;font-size:7.9px;line-height:12px;color:#2b2a29;left:321.50px;letter-spacing:-0.032px;">Primary Lease Number</span>
<span class="t" style="top:241.57px;font-size:9px;line-height:14px;color:#d0312a;font-weight:700;left:405.70px;">*</span>
<svg class="b" style="left:413.50px;top:247.10px;" width="9" height="9" viewBox="0 0 9 9"><circle cx="4.5" cy="4.5" r="3.8" fill="none" stroke="#222" stroke-width="1"/><path d="M3.4 3.7a1.1 1.1 0 1 1 1.7 .95c-.4.25-.6.45-.6.9" fill="none" stroke="#222" stroke-width=".95"/><circle cx="4.5" cy="6.6" r=".55" fill="#222"/></svg>
<div class="b" style="left:321.50px;top:262.00px;width:243.50px;height:23.50px;background:#fff;border:1px solid #a09e9b;border-radius:3px;"></div>
<span class="t" style="top:267.06px;font-size:9.2px;line-height:14px;color:#292827;left:328.50px;letter-spacing:-0.153px;">PL-19834806</span>
<span class="t sb" style="top:290.21px;font-size:7.9px;line-height:12px;color:#2b2a29;left:321.50px;">Amendment No.</span>
<div class="b" style="left:321.50px;top:306.00px;width:243.50px;height:23.50px;background:#f2f1ef;border:1px solid #e1e0dd;border-radius:3px;"></div>
<span class="t" style="top:311.06px;font-size:9.2px;line-height:14px;color:#4a4947;right:722.70px;">1</span>
<span class="t sb" style="top:334.21px;font-size:7.9px;line-height:12px;color:#2b2a29;left:321.50px;letter-spacing:-0.311px;">Lease Class</span>
<span class="t" style="top:329.57px;font-size:9px;line-height:14px;color:#d0312a;font-weight:700;left:365.20px;">*</span>
<div class="b" style="left:321.50px;top:350.00px;width:243.50px;height:23.50px;background:#fff;border:1px solid #a09e9b;border-radius:3px;"></div>
<span class="t" style="top:355.06px;font-size:9.2px;line-height:14px;color:#292827;left:328.70px;letter-spacing:-0.193px;">Tenant (Lesee)</span>
<svg class="b" style="left:550.00px;top:360.20px;" width="6.4" height="4.2" viewBox="0 0 6.4 4.2"><path d="M0 0h6.4L3.2 3.8z" fill="#1a1a1a"/></svg>
<span class="t sb" style="top:378.21px;font-size:7.9px;line-height:12px;color:#2b2a29;left:321.80px;letter-spacing:-0.156px;">Lease Type</span>
<span class="t" style="top:373.57px;font-size:9px;line-height:14px;color:#d0312a;font-weight:700;left:364.90px;">*</span>
<div class="b" style="left:321.50px;top:394.00px;width:243.50px;height:23.50px;background:#fff;border:1px solid #a09e9b;border-radius:3px;"></div>
<span class="t" style="top:399.06px;font-size:9.2px;line-height:14px;color:#292827;left:328.70px;letter-spacing:-0.318px;">Full Service Gross Lease</span>
<svg class="b" style="left:550.00px;top:404.20px;" width="6.4" height="4.2" viewBox="0 0 6.4 4.2"><path d="M0 0h6.4L3.2 3.8z" fill="#1a1a1a"/></svg>
<div class="b" style="left:50.00px;top:430.30px;width:530.00px;height:28.00px;background:#f5f4f2;border:1px solid #dedcd9;border-radius:3px;"></div>
<svg class="b" style="left:52.20px;top:437.70px;" width="7" height="9" viewBox="0 0 7 9"><path d="M1.6 1.2L5 4.5 1.6 7.8" fill="none" stroke="#1a1a1a" stroke-width="1.3"/></svg>
<span class="t" style="top:435.51px;font-size:10.6px;line-height:16px;color:#353e4c;font-weight:700;left:65.40px;letter-spacing:-0.299px;">Key Terms</span>
<div class="b" style="left:50.00px;top:462.85px;width:530.00px;height:28.00px;background:#f5f4f2;border:1px solid #dedcd9;border-radius:3px;"></div>
<svg class="b" style="left:52.20px;top:470.25px;" width="7" height="9" viewBox="0 0 7 9"><path d="M1.6 1.2L5 4.5 1.6 7.8" fill="none" stroke="#1a1a1a" stroke-width="1.3"/></svg>
<span class="t" style="top:468.06px;font-size:10.6px;line-height:16px;color:#353e4c;font-weight:700;left:65.40px;letter-spacing:-0.162px;">Description</span>
<div class="b" style="left:50.00px;top:495.40px;width:530.00px;height:28.00px;background:#f5f4f2;border:1px solid #dedcd9;border-radius:3px;"></div>
<svg class="b" style="left:52.20px;top:502.80px;" width="7" height="9" viewBox="0 0 7 9"><path d="M1.6 1.2L5 4.5 1.6 7.8" fill="none" stroke="#1a1a1a" stroke-width="1.3"/></svg>
<span class="t" style="top:500.61px;font-size:10.6px;line-height:16px;color:#353e4c;font-weight:700;left:65.40px;letter-spacing:-0.069px;">Landlord &amp; Tenant Information</span>
<div class="b" style="left:50.00px;top:527.95px;width:530.00px;height:28.00px;background:#f5f4f2;border:1px solid #dedcd9;border-radius:3px;"></div>
<svg class="b" style="left:52.20px;top:535.35px;" width="7" height="9" viewBox="0 0 7 9"><path d="M1.6 1.2L5 4.5 1.6 7.8" fill="none" stroke="#1a1a1a" stroke-width="1.3"/></svg>
<span class="t" style="top:533.16px;font-size:10.6px;line-height:16px;color:#353e4c;font-weight:700;left:65.40px;letter-spacing:-0.283px;">Leased Space Detail</span>
<div class="b" style="left:50.00px;top:560.50px;width:530.00px;height:28.00px;background:#f5f4f2;border:1px solid #dedcd9;border-radius:3px;"></div>
<svg class="b" style="left:52.20px;top:567.90px;" width="7" height="9" viewBox="0 0 7 9"><path d="M1.6 1.2L5 4.5 1.6 7.8" fill="none" stroke="#1a1a1a" stroke-width="1.3"/></svg>
<span class="t" style="top:565.71px;font-size:10.6px;line-height:16px;color:#353e4c;font-weight:700;left:65.40px;letter-spacing:-0.108px;">Security Deposit Detail</span>
<div class="b" style="left:50.00px;top:593.05px;width:530.00px;height:28.00px;background:#f5f4f2;border:1px solid #dedcd9;border-radius:3px;"></div>
<svg class="b" style="left:52.20px;top:600.45px;" width="7" height="9" viewBox="0 0 7 9"><path d="M1.6 1.2L5 4.5 1.6 7.8" fill="none" stroke="#1a1a1a" stroke-width="1.3"/></svg>
<span class="t" style="top:598.26px;font-size:10.6px;line-height:16px;color:#353e4c;font-weight:700;left:65.40px;letter-spacing:-0.201px;">Lease Amendment</span>
<div class="b" style="left:50.00px;top:625.60px;width:530.00px;height:28.00px;background:#f5f4f2;border:1px solid #dedcd9;border-radius:3px;"></div>
<svg class="b" style="left:52.20px;top:633.00px;" width="7" height="9" viewBox="0 0 7 9"><path d="M1.6 1.2L5 4.5 1.6 7.8" fill="none" stroke="#1a1a1a" stroke-width="1.3"/></svg>
<span class="t" style="top:630.81px;font-size:10.6px;line-height:16px;color:#353e4c;font-weight:700;left:65.40px;letter-spacing:-0.339px;">Currency</span>
<div class="b" style="left:50.00px;top:658.15px;width:530.00px;height:26.85px;background:#f5f4f2;border:1px solid #dedcd9;border-bottom:none;border-radius:3px 3px 0 0;"></div>
<svg class="b" style="left:52.20px;top:665.55px;" width="7" height="9" viewBox="0 0 7 9"><path d="M1.6 1.2L5 4.5 1.6 7.8" fill="none" stroke="#1a1a1a" stroke-width="1.3"/></svg>
<span class="t" style="top:663.36px;font-size:10.6px;line-height:16px;color:#353e4c;font-weight:700;left:65.40px;letter-spacing:-0.122px;">Record Information</span>
<div class="b" style="left:588.00px;top:154.00px;width:646.00px;height:531.60px;background:#fff;border-top:1.8px solid #4c4c4e;border-left:1.8px solid #47474a;border-right:1px solid #10121f;border-bottom:1px solid #10121f;box-shadow:1px 1px 3px rgba(18,22,48,.6);"></div>
<span class="t sf" style="top:157.55px;font-size:12.6px;line-height:18px;color:#1c1c1c;left:594.00px;letter-spacing:-0.015px;">Lease</span>
<div class="b" style="left:1130.10px;top:160.40px;width:64.50px;height:14.30px;background:#fff;border:1px solid #a8a6a3;border-radius:2.5px;"></div>
<span class="t sb" style="top:163.47px;font-size:6.4px;line-height:10px;color:#2a2a2a;left:1137.80px;letter-spacing:0.012px;">More Actions</span>
<svg class="b" style="left:1181.80px;top:166.00px;" width="5" height="3.4" viewBox="0 0 5 3.4"><path d="M0 0h5L2.5 3z" fill="#1a1a1a"/></svg>
<div class="b" style="left:1201.20px;top:160.40px;width:26.30px;height:14.30px;background:#2c2a28;border-radius:2.5px;"></div>
<span class="t" style="top:163.47px;font-size:6.4px;line-height:10px;color:#fff;font-weight:700;left:1214.60px;transform:translateX(-50%);letter-spacing:-0.395px;">Edit</span>
<span class="t" style="top:185.13px;font-size:7.4px;line-height:12px;color:#7c7c7c;left:593.40px;letter-spacing:-0.348px;">Lease</span>
<span class="t" style="top:185.13px;font-size:7.4px;line-height:12px;color:#2a2a2a;font-weight:700;left:626.60px;letter-spacing:-0.316px;">Payment Setup</span>
<span class="t" style="top:185.13px;font-size:7.4px;line-height:12px;color:#7c7c7c;left:689.90px;letter-spacing:-0.201px;">Key Dates</span>
<span class="t" style="top:185.13px;font-size:7.4px;line-height:12px;color:#7c7c7c;left:736.20px;letter-spacing:-0.152px;">Clauses and Provisions</span>
<span class="t" style="top:185.13px;font-size:7.4px;line-height:12px;color:#7c7c7c;left:824.30px;letter-spacing:-0.172px;">Payments</span>
<span class="t" style="top:185.13px;font-size:7.4px;line-height:12px;color:#7c7c7c;left:870.10px;letter-spacing:-0.091px;">Invoices</span>
<div class="b" style="left:590.00px;top:201.00px;width:642.00px;height:1.00px;background:#e9e8e6;"></div>
<div class="b" style="left:626.60px;top:199.80px;width:49.30px;height:1.80px;background:#141414;"></div>
<div class="b" style="left:590.00px;top:202.00px;width:350.70px;height:18.80px;background:#f2f1ef;"></div>
<div class="b" style="left:592.40px;top:205.40px;width:13.20px;height:13.80px;background:#f7f6f4;border:1px solid #a5a3a0;border-radius:2px;"></div>
<svg class="b" style="left:594.30px;top:207.30px;" width="10" height="10" viewBox="0 0 10 10"><rect x="2.6" y=".8" width="6.8" height="1.9" fill="#2a2a2a"/><rect x="2.6" y="3.4" width="6.8" height="1.9" fill="#2a2a2a"/><rect x="2.6" y="6" width="6.8" height="1.9" fill="#2a2a2a"/><rect x=".5" y="1.2" width="1.1" height="1.1" fill="#2a2a2a"/><rect x=".5" y="3.8" width="1.1" height="1.1" fill="#2a2a2a"/><rect x=".5" y="6.4" width="1.1" height="1.1" fill="#2a2a2a"/></svg>
<svg class="b" style="left:613.20px;top:207.50px;" width="9.6" height="9" viewBox="0 0 9.6 9"><rect x=".6" y=".6" width="8.4" height="7.8" fill="none" stroke="#2a2a2a" stroke-width="1.1"/><path d="M.6 3h8.4M.6 5.6h8.4M3.4 2.6v5.8M6.2 2.6v5.8" stroke="#2a2a2a" stroke-width=".9"/><rect x=".6" y=".6" width="8.4" height="2.3" fill="#2a2a2a"/></svg>
<svg class="b" style="left:631.40px;top:207.20px;" width="9.6" height="9.6" viewBox="0 0 9.6 9.6"><path d="M8 4.8a3.3 3.3 0 1 1-1.2-2.55" fill="none" stroke="#2a2a2a" stroke-width="1.1"/><path d="M5.6 1.1l2.2.9-.9 2z" fill="#2a2a2a"/></svg>
<svg class="b" style="left:650.20px;top:207.00px;" width="10" height="10" viewBox="0 0 10 10"><rect x="2.6" y=".7" width="4.8" height="2.4" fill="none" stroke="#2a2a2a" stroke-width="1"/><rect x=".8" y="3.1" width="8.4" height="4" rx=".8" fill="#2a2a2a"/><rect x="2.6" y="5.6" width="4.8" height="3.6" fill="#f2f1ef" stroke="#2a2a2a" stroke-width="1"/></svg>
<svg class="b" style="left:666.00px;top:210.40px;" width="5" height="3.4" viewBox="0 0 5 3.4"><path d="M0 0h5L2.5 3z" fill="#1a1a1a"/></svg>
<svg class="b" style="left:680.30px;top:206.80px;" width="10" height="10" viewBox="0 0 10 10"><circle cx="4.2" cy="4.2" r="3" fill="none" stroke="#2a2a2a" stroke-width="1.2"/><path d="M6.4 6.4L9.2 9.2" stroke="#2a2a2a" stroke-width="1.3"/></svg>
<svg class="b" style="left:696.00px;top:207.00px;" width="10.5" height="10" viewBox="0 0 10.5 10"><path d="M.5 1h9.4M.5 3.4h9.4M.5 5.8h4.4M.5 8.2h4.4" stroke="#2a2a2a" stroke-width="1"/><circle cx="7.3" cy="6.6" r="1.5" fill="none" stroke="#2a2a2a" stroke-width=".9"/><path d="M8.4 7.7l1.5 1.5" stroke="#2a2a2a" stroke-width=".9"/></svg>
<span class="t" style="top:234.06px;font-size:6.6px;line-height:11px;color:#1e1e1e;font-weight:700;left:602.60px;letter-spacing:-0.742px;">No.</span>
<svg class="b" style="left:612.60px;top:240.40px;" width="5" height="3.2" viewBox="0 0 5 3.2"><path d="M0 0h5L2.5 3z" fill="#444"/></svg>
<svg class="b" style="left:626.80px;top:235.20px;" width="4" height="7.5" viewBox="0 0 4 7.5"><path d="M.9 2.4v3.2a1.1 1.1 0 0 0 2.2 0V1.6a.8.8 0 0 0-1.6 0v3.6" fill="#444" stroke="#333" stroke-width=".8"/></svg>
<svg class="b" style="left:639.50px;top:235.80px;" width="7" height="6" viewBox="0 0 7 6"><path d="M3.1 3.9a1.4 1.4 0 0 1 0-2l.9-.9a1.4 1.4 0 0 1 2 2l-.5.5M3.9 2.1a1.4 1.4 0 0 1 0 2l-.9.9a1.4 1.4 0 0 1-2-2l.5-.5" fill="none" stroke="#555" stroke-width=".8"/></svg>
<span class="t" style="top:233.86px;font-size:6.6px;line-height:11px;color:#555;font-weight:700;left:646.30px;letter-spacing:-0.167px;">...</span>
<span class="t" style="top:234.06px;font-size:6.6px;line-height:11px;color:#1e1e1e;font-weight:700;left:656.60px;letter-spacing:-0.318px;">Payment Type</span>
<span class="t" style="top:234.06px;font-size:6.6px;line-height:11px;color:#1e1e1e;font-weight:700;left:731.10px;letter-spacing:-0.373px;">Frequency</span>
<span class="t" style="top:234.06px;font-size:6.6px;line-height:11px;color:#1e1e1e;font-weight:700;left:806.20px;letter-spacing:-0.459px;">Account Code</span>
<span class="t" style="top:234.06px;font-size:6.6px;line-height:11px;color:#1e1e1e;font-weight:700;left:881.10px;letter-spacing:-0.414px;">Account Name</span>
<div class="b" style="left:592.50px;top:245.00px;width:347.60px;height:52.30px;background:#fff;border:1px solid #f3f2f0;"></div>
<div class="b" style="left:592.50px;top:258.00px;width:347.60px;height:13.10px;background:#e1f0d9;"></div>
<div class="b" style="left:592.50px;top:258.00px;width:347.60px;height:1.00px;background:#f3f2f0;"></div>
<div class="b" style="left:592.50px;top:271.10px;width:347.60px;height:1.00px;background:#f3f2f0;"></div>
<div class="b" style="left:592.50px;top:284.10px;width:347.60px;height:1.00px;background:#f3f2f0;"></div>
<div class="b" style="left:622.20px;top:245.00px;width:1.00px;height:13.00px;background:#f3f2f0;"></div>
<div class="b" style="left:622.20px;top:271.10px;width:1.00px;height:26.00px;background:#f3f2f0;"></div>
<div class="b" style="left:637.30px;top:245.00px;width:1.00px;height:13.00px;background:#f3f2f0;"></div>
<div class="b" style="left:637.30px;top:271.10px;width:1.00px;height:26.00px;background:#f3f2f0;"></div>
<div class="b" style="left:653.60px;top:245.00px;width:1.00px;height:13.00px;background:#f3f2f0;"></div>
<div class="b" style="left:653.60px;top:271.10px;width:1.00px;height:26.00px;background:#f3f2f0;"></div>
<div class="b" style="left:728.50px;top:245.00px;width:1.00px;height:13.00px;background:#f3f2f0;"></div>
<div class="b" style="left:728.50px;top:271.10px;width:1.00px;height:26.00px;background:#f3f2f0;"></div>
<div class="b" style="left:802.70px;top:245.00px;width:1.00px;height:13.00px;background:#f3f2f0;"></div>
<div class="b" style="left:802.70px;top:271.10px;width:1.00px;height:26.00px;background:#f3f2f0;"></div>
<div class="b" style="left:877.90px;top:245.00px;width:1.00px;height:13.00px;background:#f3f2f0;"></div>
<div class="b" style="left:877.90px;top:271.10px;width:1.00px;height:26.00px;background:#f3f2f0;"></div>
<span class="t" style="top:247.27px;font-size:6.4px;line-height:10px;color:#858585;left:608.50px;letter-spacing:-0.091px;">004</span>
<span class="t" style="top:247.27px;font-size:6.4px;line-height:10px;color:#858585;left:657.20px;letter-spacing:-0.253px;">Insurance</span>
<span class="t" style="top:247.27px;font-size:6.4px;line-height:10px;color:#858585;left:731.70px;letter-spacing:0.044px;">Monthly</span>
<span class="t" style="top:247.27px;font-size:6.4px;line-height:10px;color:#858585;left:806.50px;letter-spacing:-0.129px;">Revenue-4000-Rental I...</span>
<span class="t" style="top:247.27px;font-size:6.4px;line-height:10px;color:#858585;left:881.40px;letter-spacing:-0.248px;">Rental Income</span>
<span class="t" style="top:260.30px;font-size:6.4px;line-height:10px;color:#858585;left:608.50px;letter-spacing:-0.091px;">003</span>
<span class="t" style="top:260.30px;font-size:6.4px;line-height:10px;color:#858585;left:657.20px;letter-spacing:-0.350px;">Rent</span>
<span class="t" style="top:260.30px;font-size:6.4px;line-height:10px;color:#858585;left:731.70px;letter-spacing:0.044px;">Monthly</span>
<span class="t" style="top:260.30px;font-size:6.4px;line-height:10px;color:#858585;left:806.50px;letter-spacing:-0.129px;">Revenue-4000-Rental I...</span>
<span class="t" style="top:260.30px;font-size:6.4px;line-height:10px;color:#858585;left:881.40px;letter-spacing:-0.248px;">Rental Income</span>
<span class="t" style="top:273.33px;font-size:6.4px;line-height:10px;color:#858585;left:608.50px;letter-spacing:-0.091px;">002</span>
<span class="t" style="top:273.33px;font-size:6.4px;line-height:10px;color:#858585;left:657.20px;letter-spacing:-0.194px;">Property Taxes</span>
<span class="t" style="top:273.33px;font-size:6.4px;line-height:10px;color:#858585;left:731.70px;letter-spacing:-0.062px;">6 Months</span>
<span class="t" style="top:273.33px;font-size:6.4px;line-height:10px;color:#858585;left:806.50px;letter-spacing:-0.129px;">Revenue-4000-Rental I...</span>
<span class="t" style="top:273.33px;font-size:6.4px;line-height:10px;color:#858585;left:881.40px;letter-spacing:-0.248px;">Rental Income</span>
<span class="t" style="top:286.36px;font-size:6.4px;line-height:10px;color:#858585;left:608.50px;letter-spacing:-0.091px;">001</span>
<span class="t" style="top:286.36px;font-size:6.4px;line-height:10px;color:#858585;left:657.20px;letter-spacing:-0.601px;">CAM</span>
<span class="t" style="top:286.36px;font-size:6.4px;line-height:10px;color:#858585;left:731.70px;letter-spacing:0.044px;">Monthly</span>
<span class="t" style="top:286.36px;font-size:6.4px;line-height:10px;color:#858585;left:806.50px;letter-spacing:-0.129px;">Revenue-4000-Rental I...</span>
<span class="t" style="top:286.36px;font-size:6.4px;line-height:10px;color:#858585;left:881.40px;letter-spacing:-0.248px;">Rental Income</span>
<div class="b" style="left:940.60px;top:202.00px;width:1.00px;height:481.50px;background:#e2e1df;"></div>
<svg class="b" style="left:942.40px;top:473.50px;" width="3" height="8" viewBox="0 0 3 8"><circle cx="1.5" cy="1.2" r=".8" fill="#333"/><circle cx="1.5" cy="4" r=".8" fill="#333"/><circle cx="1.5" cy="6.8" r=".8" fill="#333"/></svg>
<div class="b" style="left:597.80px;top:631.50px;width:176.20px;height:3.30px;background:#a9a8a6;border-radius:1.6px;"></div>
<svg class="b" style="left:593.00px;top:631.60px;" width="3" height="3" viewBox="0 0 3 3"><path d="M2.4 .2L.5 1.5l1.9 1.3z" fill="#aaa"/></svg>
<svg class="b" style="left:935.00px;top:631.60px;" width="3" height="3" viewBox="0 0 3 3"><path d="M.6 .2l1.9 1.3L.6 2.8z" fill="#aaa"/></svg>
<div class="b" style="left:592.50px;top:636.20px;width:347.60px;height:1.00px;background:#efeeec;"></div>
<div class="b" style="left:790.20px;top:643.50px;width:94.40px;height:19.30px;background:#fff;border:1px solid #b0aeab;border-radius:2.5px;"></div>
<span class="t" style="top:648.23px;font-size:7.4px;line-height:12px;color:#3a3a3a;left:796.10px;letter-spacing:-0.045px;">Total Amount</span>
<div class="b" style="left:865.20px;top:646.00px;width:1.00px;height:14.30px;background:#d5d4d2;"></div>
<svg class="b" style="left:872.40px;top:652.20px;" width="5" height="3.4" viewBox="0 0 5 3.4"><path d="M0 0h5L2.5 3z" fill="#1a1a1a"/></svg>
<span class="t" style="top:648.33px;font-size:7.4px;line-height:12px;color:#555;left:888.20px;letter-spacing:0.083px;">: $71,350.00</span>
<span class="t" style="top:669.54px;font-size:7px;line-height:11px;color:#2f2f2f;font-weight:700;left:602.90px;letter-spacing:-0.047px;">Total: 4</span>
<span class="t" style="top:206.43px;font-size:7.4px;line-height:12px;color:#7c7c7c;left:948.10px;letter-spacing:-0.038px;">Line Item Details</span>
<span class="t" style="top:206.43px;font-size:7.4px;line-height:12px;color:#7c7c7c;left:1016.60px;">Attachments</span>
<span class="t" style="top:206.43px;font-size:7.4px;line-height:12px;color:#7c7c7c;left:1071.80px;letter-spacing:-0.161px;">Linked Records</span>
<svg class="b" style="left:1224.20px;top:207.50px;" width="8.2" height="9.2" viewBox="0 0 8.2 9.2"><path d="M.6 2.9V.6h2.3M5.3 .6h2.3v2.3M7.6 6.3v2.3H5.3M2.9 8.6H.6V6.3" fill="none" stroke="#222" stroke-width="1.15"/></svg>
<div class="b" style="left:948.00px;top:225.30px;width:277.40px;height:206.40px;background:#f5f4f2;border:1px solid #dedcd9;border-radius:2.5px;"></div>
<svg class="b" style="left:948.40px;top:232.90px;" width="8" height="5.4" viewBox="0 0 8 5.4"><path d="M1 1.1L4 3.9 7 1.1" fill="none" stroke="#1a1a1a" stroke-width="1.15"/></svg>
<span class="t" style="top:230.79px;font-size:8.4px;line-height:13px;color:#353e4c;font-weight:700;left:960.30px;letter-spacing:-0.039px;">Payment Detail</span>
<span class="t sb" style="top:245.16px;font-size:6.5px;line-height:10px;color:#2b2a29;left:952.20px;letter-spacing:-0.203px;">Payment Type</span>
<span class="t sb" style="top:245.16px;font-size:6.5px;line-height:10px;color:#2b2a29;left:1093.90px;letter-spacing:-0.067px;">Proration Method</span>
<svg class="b" style="left:1145.90px;top:246.00px;" width="7.2" height="7.2" viewBox="0 0 7.2 7.2"><circle cx="3.6" cy="3.6" r="2.9" fill="none" stroke="#333" stroke-width=".7"/><path d="M2.8 3a.85.85 0 1 1 1.3 .7c-.3.2-.5.35-.5.7" fill="none" stroke="#333" stroke-width=".65"/><circle cx="3.6" cy="5.2" r=".36" fill="#333"/></svg>
<div class="b" style="left:951.00px;top:258.10px;width:127.90px;height:19.60px;background:#f2f1ef;border:1px solid #eae9e6;border-radius:2.5px;"></div>
<span class="t" style="top:262.72px;font-size:7.6px;line-height:12px;color:#3f3e3d;left:957.80px;letter-spacing:-0.387px;">Rent</span>
<div class="b" style="left:1092.70px;top:258.10px;width:127.60px;height:19.60px;background:#f2f1ef;border:1px solid #eae9e6;border-radius:2.5px;"></div>
<span class="t" style="top:262.72px;font-size:7.6px;line-height:12px;color:#3f3e3d;left:1099.60px;letter-spacing:-0.181px;">360 Days/Year</span>
<span class="t sb" style="top:280.16px;font-size:6.5px;line-height:10px;color:#2b2a29;left:952.20px;letter-spacing:-0.213px;">Frequency</span>
<span class="t sb" style="top:280.16px;font-size:6.5px;line-height:10px;color:#2b2a29;left:1093.90px;letter-spacing:-0.061px;">Allocation Template</span>
<div class="b" style="left:951.00px;top:292.70px;width:127.90px;height:19.60px;background:#f2f1ef;border:1px solid #eae9e6;border-radius:2.5px;"></div>
<span class="t" style="top:297.42px;font-size:7.6px;line-height:12px;color:#3f3e3d;left:957.80px;letter-spacing:-0.085px;">Monthly</span>
<div class="b" style="left:1092.70px;top:292.70px;width:106.70px;height:19.60px;background:#f2f1ef;border:1px solid #eae9e6;border-radius:2.5px;"></div>
<span class="t sb" style="top:317.66px;font-size:6.5px;line-height:10px;color:#2b2a29;left:952.20px;letter-spacing:-0.127px;">Start Date</span>
<span class="t sb" style="top:317.66px;font-size:6.5px;line-height:10px;color:#2b2a29;left:1093.90px;letter-spacing:-0.251px;">End Date</span>
<div class="b" style="left:951.00px;top:329.80px;width:127.90px;height:19.60px;background:#f2f1ef;border:1px solid #eae9e6;border-radius:2.5px;"></div>
<span class="t" style="top:334.42px;font-size:7.6px;line-height:12px;color:#3f3e3d;left:957.80px;letter-spacing:0.248px;">08/07/2023</span>
<div class="b" style="left:1092.70px;top:329.80px;width:127.60px;height:19.60px;background:#f2f1ef;border:1px solid #eae9e6;border-radius:2.5px;"></div>
<span class="t" style="top:334.42px;font-size:7.6px;line-height:12px;color:#3f3e3d;left:1099.60px;letter-spacing:0.248px;">12/31/2028</span>
<span class="t sb" style="top:359.16px;font-size:6.5px;line-height:10px;color:#2b2a29;left:952.20px;letter-spacing:0.016px;">Amount</span>
<div class="b" style="left:951.00px;top:371.60px;width:127.90px;height:19.60px;background:#f2f1ef;border:1px solid #eae9e6;border-radius:2.5px;"></div>
<span class="t" style="top:376.32px;font-size:7.6px;line-height:12px;color:#3f3e3d;right:207.40px;">$65,000.00</span>
<span class="t sb" style="top:394.16px;font-size:6.5px;line-height:10px;color:#2b2a29;left:952.20px;letter-spacing:-0.050px;">Additional Payment Amount</span>
<span class="t sb" style="top:394.16px;font-size:6.5px;line-height:10px;color:#2b2a29;left:1093.90px;letter-spacing:-0.047px;">Total Payment Amount</span>
<div class="b" style="left:951.00px;top:406.70px;width:127.90px;height:19.60px;background:#f2f1ef;border:1px solid #eae9e6;border-radius:2.5px;"></div>
<span class="t" style="top:411.32px;font-size:7.6px;line-height:12px;color:#3f3e3d;right:207.40px;">$0.00</span>
<div class="b" style="left:1092.70px;top:406.70px;width:127.60px;height:19.60px;background:#f2f1ef;border:1px solid #eae9e6;border-radius:2.5px;"></div>
<span class="t" style="top:411.32px;font-size:7.6px;line-height:12px;color:#3f3e3d;right:65.60px;">$65,000.00</span>
<div class="b" style="left:948.00px;top:435.40px;width:277.40px;height:126.70px;background:#f5f4f2;border:1px solid #dedcd9;border-radius:2.5px;"></div>
<svg class="b" style="left:948.40px;top:442.50px;" width="8" height="5.4" viewBox="0 0 8 5.4"><path d="M1 1.1L4 3.9 7 1.1" fill="none" stroke="#1a1a1a" stroke-width="1.15"/></svg>
<span class="t" style="top:440.39px;font-size:8.4px;line-height:13px;color:#353e4c;font-weight:700;left:960.30px;letter-spacing:-0.062px;">Payment Trigger Date Setup</span>
<span class="t sb" style="top:455.26px;font-size:6.5px;line-height:10px;color:#2b2a29;left:952.20px;letter-spacing:-0.186px;">Payment due day</span>
<span class="t sb" style="top:455.26px;font-size:6.5px;line-height:10px;color:#2b2a29;left:1093.90px;letter-spacing:-0.189px;">Payment Due Date</span>
<div class="b" style="left:951.00px;top:467.20px;width:127.90px;height:19.60px;background:#f2f1ef;border:1px solid #eae9e6;border-radius:2.5px;"></div>
<span class="t" style="top:471.82px;font-size:7.6px;line-height:12px;color:#3f3e3d;left:958.20px;">3</span>
<div class="b" style="left:1092.70px;top:467.20px;width:127.60px;height:19.60px;background:#f2f1ef;border:1px solid #eae9e6;border-radius:2.5px;"></div>
<span class="t" style="top:471.82px;font-size:7.6px;line-height:12px;color:#3f3e3d;left:1099.60px;letter-spacing:0.298px;">04/03/2025</span>
<span class="t sb" style="top:490.66px;font-size:6.5px;line-height:10px;color:#2b2a29;left:952.20px;letter-spacing:-0.118px;">Latest payment due day</span>
<span class="t sb" style="top:490.66px;font-size:6.5px;line-height:10px;color:#2b2a29;left:1093.90px;letter-spacing:-0.118px;">Payment Late if Received After</span>
<div class="b" style="left:951.00px;top:502.20px;width:127.90px;height:19.60px;background:#f2f1ef;border:1px solid #eae9e6;border-radius:2.5px;"></div>
<span class="t" style="top:506.92px;font-size:7.6px;line-height:12px;color:#3f3e3d;left:958.20px;letter-spacing:-0.127px;">10</span>
<div class="b" style="left:1092.70px;top:502.20px;width:127.60px;height:19.60px;background:#f2f1ef;border:1px solid #eae9e6;border-radius:2.5px;"></div>
<span class="t" style="top:506.92px;font-size:7.6px;line-height:12px;color:#3f3e3d;left:1099.60px;letter-spacing:0.298px;">04/10/2025</span>
<span class="t sb" style="top:525.66px;font-size:6.5px;line-height:10px;color:#2b2a29;left:952.20px;letter-spacing:-0.103px;">Payment creation lead time</span>
<span class="t sb" style="top:525.66px;font-size:6.5px;line-height:10px;color:#2b2a29;left:1093.90px;letter-spacing:-0.151px;">Payment Creation Date</span>
<div class="b" style="left:951.00px;top:537.20px;width:127.90px;height:19.60px;background:#f2f1ef;border:1px solid #eae9e6;border-radius:2.5px;"></div>
<span class="t" style="top:541.92px;font-size:7.6px;line-height:12px;color:#3f3e3d;left:958.20px;letter-spacing:-0.127px;">10</span>
<div class="b" style="left:1092.70px;top:537.20px;width:127.60px;height:19.60px;background:#f2f1ef;border:1px solid #eae9e6;border-radius:2.5px;"></div>
<span class="t" style="top:541.92px;font-size:7.6px;line-height:12px;color:#3f3e3d;left:1099.60px;letter-spacing:0.298px;">03/31/2025</span>
<div class="b" style="left:948.00px;top:566.30px;width:277.40px;height:96.00px;background:#f5f4f2;border:1px solid #dedcd9;border-radius:2.5px;"></div>
<svg class="b" style="left:948.40px;top:573.80px;" width="8" height="5.4" viewBox="0 0 8 5.4"><path d="M1 1.1L4 3.9 7 1.1" fill="none" stroke="#1a1a1a" stroke-width="1.15"/></svg>
<span class="t" style="top:571.69px;font-size:8.4px;line-height:13px;color:#353e4c;font-weight:700;left:960.30px;letter-spacing:-0.207px;">Cost Account Setup</span>
<span class="t sb" style="top:586.06px;font-size:6.5px;line-height:10px;color:#2b2a29;left:952.20px;letter-spacing:-0.187px;">Account Code</span>
<span class="t sb" style="top:586.06px;font-size:6.5px;line-height:10px;color:#2b2a29;left:1093.90px;letter-spacing:-0.162px;">Account Name</span>
<div class="b" style="left:951.00px;top:598.90px;width:106.40px;height:18.90px;background:#f2f1ef;border:1px solid #eae9e6;border-radius:2.5px;"></div>
<span class="t" style="top:598.52px;font-size:7.6px;line-height:12px;color:#3f3e3d;left:957.90px;letter-spacing:-0.227px;">Revenue-4000-Rental</span>
<span class="t" style="top:608.02px;font-size:7.6px;line-height:12px;color:#3f3e3d;left:957.90px;letter-spacing:-0.268px;">Income</span>
<div class="b" style="left:1092.70px;top:598.90px;width:127.60px;height:18.90px;background:#f2f1ef;border:1px solid #eae9e6;border-radius:2.5px;"></div>
<span class="t" style="top:602.82px;font-size:7.6px;line-height:12px;color:#3f3e3d;left:1099.60px;letter-spacing:-0.305px;">Rental Income</span>
<span class="t sb" style="top:623.16px;font-size:6.5px;line-height:10px;color:#2b2a29;left:952.20px;letter-spacing:-0.062px;">Short Description</span>
<div class="b" style="left:951.00px;top:636.00px;width:127.90px;height:18.50px;background:#f2f1ef;border:1px solid #eae9e6;border-radius:2.5px;"></div>
<span class="t" style="top:640.12px;font-size:7.6px;line-height:12px;color:#3f3e3d;left:957.90px;letter-spacing:-0.387px;">Rent</span>
<div class="b" style="left:942.00px;top:659.20px;width:290.00px;height:24.50px;background:#fff;"></div>
</div>
</body></html>
